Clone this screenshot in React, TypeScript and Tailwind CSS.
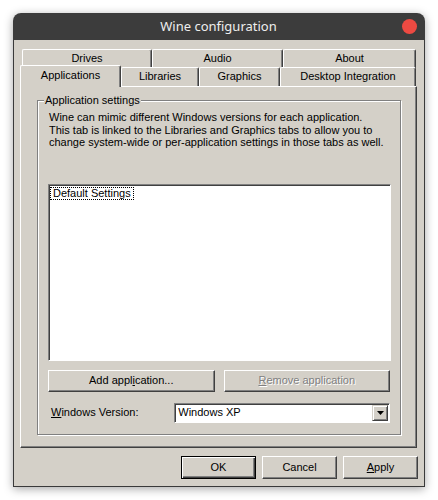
import React from "react";

const FONT = { fontFamily: '"Liberation Sans", Arial, sans-serif' };

function Raised({
  children,
  className = "",
  isDefault = false,
}: {
  children: React.ReactNode;
  className?: string;
  isDefault?: boolean;
}) {
  const edge = isDefault
    ? "border border-black shadow-[inset_1px_1px_0_#fff,inset_-1px_-1px_0_#404040,inset_-2px_-2px_0_#808080]"
    : "border border-t-white border-l-white border-b-[#404040] border-r-[#404040] shadow-[inset_-1px_-1px_0_#808080]";
  return (
    <div
      className={`flex items-center justify-center bg-[#d4d0c8] text-[11px] text-black ${edge} ${className}`}
    >
      {children}
    </div>
  );
}

function Tab({
  label,
  width,
  selected = false,
}: {
  label: string;
  width: number;
  selected?: boolean;
}) {
  return (
    <div
      style={{ width }}
      className={`flex shrink-0 items-center justify-center rounded-t-[2px] border-l border-t border-r border-l-white border-t-white border-r-[#404040] bg-[#d4d0c8] text-[11px] text-black shadow-[inset_-1px_0_0_#808080] ${
        selected ? "relative z-10 -mb-px h-[22px] pb-[3px]" : "h-[19px] pb-px"
      }`}
    >
      {label}
    </div>
  );
}

export default function App() {
  return (
    <div className="h-[500px] w-[438px] bg-white pl-[13px] pt-[13px]" style={FONT}>
      <div className="flex h-[474px] w-[412px] flex-col overflow-hidden rounded-t-[8px] shadow-[0_2px_10px_rgba(0,0,0,0.35)]">
        {/* title bar */}
        <div className="flex h-[27px] shrink-0 items-center bg-[#3c3c3c] pl-[8px] pr-[8px]">
          <div className="w-[14px]" />
          <div
            className="flex-1 text-center text-[13px] text-[#eeeeee]"
            style={{ fontFamily: '"Noto Sans", "Open Sans", sans-serif' }}
          >
            Wine configuration
          </div>
          <div className="h-[15px] w-[15px] rounded-full bg-[#ed4a42]" />
        </div>

        {/* body */}
        <div className="flex flex-1 flex-col border-x border-b border-[#3a3a3a] bg-[#d4d0c8] px-[6px] pt-[9px]">
          {/* tab strip */}
          <div className="flex w-[397px] flex-col">
            <div className="flex h-[16px] pl-[2px]">
              <div className="flex items-start">
                <Tab label="Drives" width={130} />
                <Tab label="Audio" width={131} />
                <Tab label="About" width={133} />
              </div>
            </div>
            <div className="flex h-[21px] items-end">
              <Tab label="Applications" width={101} selected />
              <Tab label="Libraries" width={78} />
              <Tab label="Graphics" width={81} />
              <Tab label="Desktop Integration" width={136} />
            </div>
          </div>

          {/* tab panel */}
          <div className="h-[362px] w-[397px] border border-t-white border-l-white border-b-[#404040] border-r-[#404040] px-[16px] pt-[13px] shadow-[inset_-1px_-1px_0_#808080]">
            <div className="relative h-[335px] w-[364px] border border-[#808080] shadow-[1px_1px_0_#fff,inset_1px_1px_0_#fff]">
              <span className="absolute left-[6px] top-[-7px] bg-[#d4d0c8] px-px text-[11px] leading-[13px] text-black">
                Application settings
              </span>
              <div className="px-[10px] pt-[10px]">
                <p className="pl-px text-[11px] leading-[12.5px] text-black">
                  Wine can mimic different Windows versions for each application.
                  <br />
                  This tab is linked to the Libraries and Graphics tabs to allow you to
                  <br />
                  change system-wide or per-application settings in those tabs as well.
                </p>

                <div className="mt-[35px] h-[177px] w-[343px] border border-t-[#808080] border-l-[#808080] border-b-white border-r-white bg-white p-px shadow-[inset_1px_1px_0_#404040]">
                  <div className="mt-px w-fit border border-dotted border-black px-[2px] text-[11px] leading-[11px] text-black">
                    Default Settings
                  </div>
                </div>

                <div className="mt-[9px] flex gap-[9px]">
                  <Raised className="h-[22px] w-[168px]">
                    <span>
                      Add appl<span className="underline">i</span>cation...
                    </span>
                  </Raised>
                  <Raised className="h-[22px] w-[168px]">
                    <span className="text-[#808080] [text-shadow:1px_1px_0_#fff]">
                      <span className="underline">R</span>emove application
                    </span>
                  </Raised>
                </div>

                <div className="mt-[11px] flex items-center">
                  <div className="w-[127px] pl-[3px] text-[11px] text-black">
                    <span className="underline">W</span>indows Version:
                  </div>
                  <div className="flex h-[20px] w-[217px] items-center border border-t-[#808080] border-l-[#808080] border-b-white border-r-white bg-white shadow-[inset_1px_1px_0_#404040]">
                    <div className="flex-1 pl-[3px] text-[11px] text-black">Windows XP</div>
                    <div className="mr-px flex h-[16px] w-[16px] items-center justify-center border border-t-[#d4d0c8] border-l-[#d4d0c8] border-b-[#404040] border-r-[#404040] bg-[#d4d0c8] shadow-[inset_1px_1px_0_#fff,inset_-1px_-1px_0_#808080]">
                      <svg width="7" height="4" viewBox="0 0 7 4">
                        <path d="M0 0h7L3.5 4z" fill="#000" />
                      </svg>
                    </div>
                  </div>
                </div>
              </div>
            </div>
          </div>

          {/* dialog buttons */}
          <div className="mt-[8px] flex justify-end gap-[6px]">
            <Raised isDefault className="h-[23px] w-[75px]">
              OK
            </Raised>
            <Raised className="h-[23px] w-[75px]">Cancel</Raised>
            <Raised className="h-[23px] w-[75px]">
              <span>
                <span className="underline">A</span>pply
              </span>
            </Raised>
          </div>
        </div>
      </div>
    </div>
  );
}
